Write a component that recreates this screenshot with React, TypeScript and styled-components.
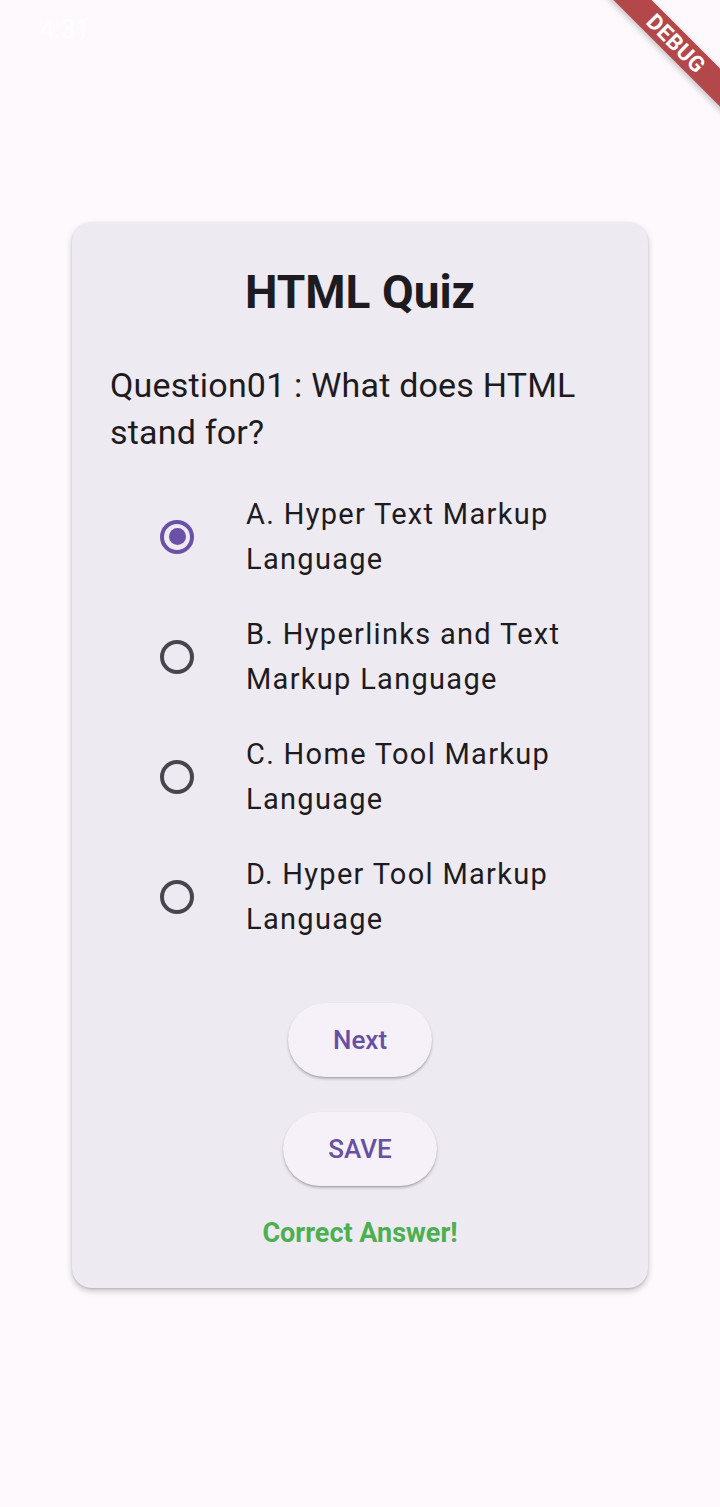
import React, { useState } from "react";
import styled, { createGlobalStyle } from "styled-components";

const GlobalStyle = createGlobalStyle`
  html, body {
    margin: 0;
    padding: 0;
    background: #fef9fd;
    font-family: Roboto, "Noto Sans", sans-serif;
  }
`;

const Screen = styled.div`
  position: relative;
  min-height: 1507px;
  display: flex;
  align-items: center;
  justify-content: center;
  padding-top: 2px;
  box-sizing: border-box;
  overflow: hidden;
`;

const StatusBar = styled.div`
  position: absolute;
  top: 14px;
  left: 40px;
  right: 40px;
  display: flex;
  justify-content: space-between;
  color: rgba(255, 255, 255, 0.8);
  font-size: 26px;
`;

const BannerCorner = styled.div`
  position: absolute;
  top: 0;
  right: 0;
  width: 150px;
  height: 150px;
  overflow: hidden;
  pointer-events: none;
`;

const Ribbon = styled.div`
  position: absolute;
  left: 6px;
  top: 30px;
  width: 200px;
  height: 27px;
  transform: rotate(45deg);
  background: #b4474a;
  box-shadow: 0 2px 6px rgba(0, 0, 0, 0.25);
  color: #ffffff;
  font-weight: 700;
  font-size: 22px;
  line-height: 27px;
  text-align: center;
  letter-spacing: 0.5px;
`;

const Card = styled.div`
  width: 576px;
  box-sizing: border-box;
  padding: 43px 38px 40px;
  background: #eeeaf2;
  border-radius: 20px;
  box-shadow: 0 3px 6px rgba(0, 0, 0, 0.22), 0 1px 2px rgba(0, 0, 0, 0.12);
  display: flex;
  flex-direction: column;
`;

const Title = styled.h1`
  margin: 0;
  font-size: 46px;
  line-height: 54px;
  font-weight: 700;
  color: #1d1b20;
  text-align: center;
`;

const Question = styled.p`
  margin: 43px 0 21px;
  font-size: 34px;
  line-height: 47px;
  letter-spacing: 0.2px;
  color: #1d1b20;
`;

const OptionList = styled.div`
  display: flex;
  flex-direction: column;
`;

const OptionRow = styled.label`
  display: flex;
  align-items: center;
  height: 120px;
  padding-left: 50px;
  cursor: pointer;
`;

const RadioOuter = styled.span<{ $on: boolean }>`
  flex: none;
  width: 34px;
  height: 34px;
  box-sizing: border-box;
  border-radius: 50%;
  border: 4px solid ${(p) => (p.$on ? "#6a50a7" : "#49454f")};
  display: flex;
  align-items: center;
  justify-content: center;
`;

const RadioDot = styled.span`
  width: 17px;
  height: 17px;
  border-radius: 50%;
  background: #6a50a7;
`;

const OptionText = styled.span`
  margin-left: 52px;
  font-size: 29px;
  line-height: 45px;
  letter-spacing: 1.3px;
  color: #1d1b20;
`;

const Actions = styled.div`
  display: flex;
  flex-direction: column;
  align-items: center;
  margin-top: 46px;
  gap: 35px;
`;

const PillButton = styled.button<{ $w: number }>`
  width: ${(p) => p.$w}px;
  height: 74px;
  border: none;
  border-radius: 37px;
  background: #f6f1f9;
  color: #6750a4;
  font-family: Roboto, sans-serif;
  font-size: 26px;
  font-weight: 500;
  box-shadow: 0 2px 3px rgba(0, 0, 0, 0.22), 0 1px 1px rgba(0, 0, 0, 0.1);
  cursor: pointer;
`;

const Feedback = styled.div`
  margin-top: 32px;
  text-align: center;
  font-size: 27px;
  line-height: 30px;
  font-weight: 700;
  color: #4caf50;
`;

const options = [
  "A. Hyper Text Markup Language",
  "B. Hyperlinks and Text Markup Language",
  "C. Home Tool Markup Language",
  "D. Hyper Tool Markup Language",
];

export default function App() {
  const [selected, setSelected] = useState(0);

  return (
    <Screen>
      <GlobalStyle />
      <StatusBar>
        <span>4:31</span>
        <span>94%</span>
      </StatusBar>
      <BannerCorner>
        <Ribbon>DEBUG</Ribbon>
      </BannerCorner>
      <Card>
        <Title>HTML Quiz</Title>
        <Question>Question01 : What does HTML stand for?</Question>
        <OptionList>
          {options.map((o, i) => (
            <OptionRow key={o} onClick={() => setSelected(i)}>
              <RadioOuter $on={selected === i}>
                {selected === i && <RadioDot />}
              </RadioOuter>
              <OptionText>{o}</OptionText>
            </OptionRow>
          ))}
        </OptionList>
        <Actions>
          <PillButton $w={144}>Next</PillButton>
          <PillButton $w={154}>SAVE</PillButton>
        </Actions>
        <Feedback>Correct Answer!</Feedback>
      </Card>
    </Screen>
  );
}
